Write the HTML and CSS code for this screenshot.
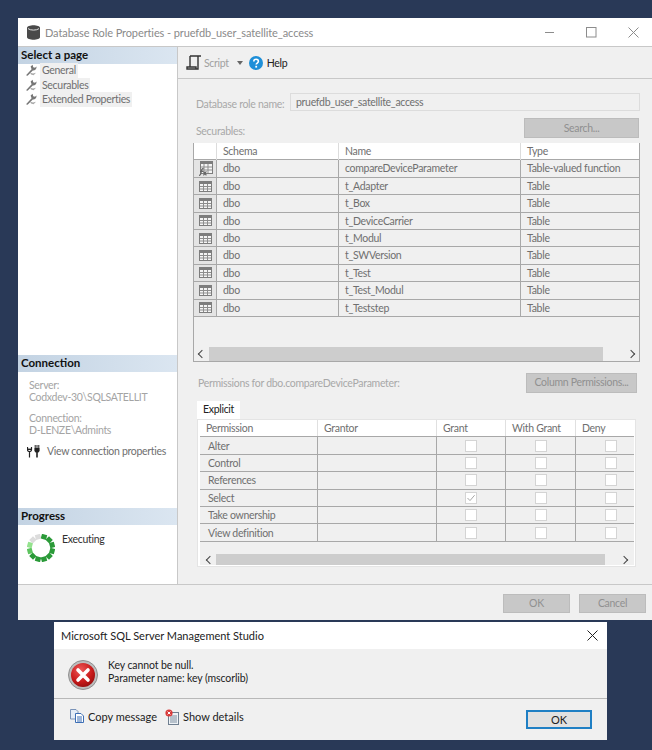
FILE: index.html
```html
<!DOCTYPE html>
<html lang="en">
<head>
  <meta charset="UTF-8" />
  <title>Database Role Properties</title>
  <link rel="stylesheet" href="styles.css">
</head>
<body>
  <svg class="defs" width="0" height="0">
    <defs>
      <symbol id="wrench" viewBox="0 0 12 12">
        <path d="M1 11.2 L6.6 5.2 L5.6 2.6 L7.6 .8 L8.2 3.2 L10 3.8 L11.6 2.4 C11.6 5 10 6.6 7.8 6.4 L2.6 11.8 Z" fill="#777"/>
        <path d="M5 8.4 L8 9.6 L11 8.8 L8.6 11.2 L6 10.6 Z" fill="#aaa"/>
      </symbol>
      <symbol id="grid" viewBox="0 0 13 11">
        <rect x=".5" y=".5" width="12" height="10" fill="#f4f4f4" stroke="#7d7d7d"/>
        <rect x="1" y="1" width="11" height="2" fill="#7d7d7d"/>
        <path d="M4.5 3V10M8.5 3V10M1 5.5H12M1 8H12" stroke="#8d8d8d" fill="none"/>
      </symbol>
      <symbol id="gridfx" viewBox="0 0 15 15">
        <rect x="2.5" y=".5" width="12" height="12" fill="#f4f4f4" stroke="#7d7d7d"/>
        <rect x="3" y="1" width="11" height="2" fill="#7d7d7d"/>
        <path d="M6 3V12M10 3V12M3 6H14M3 9H14" stroke="#8d8d8d" fill="none"/>
        <path d="M1 14.5 C3 14.5 3 13 3.4 10 C3.7 8 4 7.4 5.6 7.4 M2 10.4H5M5.4 10.4 L8.4 14.4M8.4 10.4 L5.4 14.4" stroke="#666" stroke-width="1.1" fill="none"/>
      </symbol>
      <symbol id="tick" viewBox="0 0 12 12">
        <path d="M2.5 6 L5 8.6 L9.6 3.2" stroke="#a8a8a8" fill="none"/>
      </symbol>
      <radialGradient id="red" cx=".4" cy=".3" r=".8">
        <stop offset="0" stop-color="#ee5a5a"/>
        <stop offset=".6" stop-color="#c81a1a"/>
        <stop offset="1" stop-color="#8a0c0c"/>
      </radialGradient>
    </defs>
  </svg>

  <div class="window">
    <div class="titlebar">
      <svg class="db-icon" width="13" height="15" viewBox="0 0 13 15"><path d="M0 3 C0 -.6 13 -.6 13 3 V12 C13 15.6 0 15.6 0 12 Z" fill="#4a4a4a"/><path d="M1 3.6 C3 5.6 10 5.6 12 3.6" stroke="#ddd" fill="none"/></svg>
      <span class="title">Database Role Properties - pruefdb_user_satellite_access</span>
      <div class="win-btns">
        <svg width="11" height="11" viewBox="0 0 11 11"><path d="M1 5.5H10" stroke="#8c8c8c"/></svg>
        <svg width="11" height="11" viewBox="0 0 11 11"><rect x=".5" y=".5" width="9.5" height="9.5" fill="none" stroke="#8c8c8c"/></svg>
        <svg width="11" height="11" viewBox="0 0 11 11"><path d="M.5 .5L10.5 10.5M10.5 .5L.5 10.5" stroke="#8c8c8c"/></svg>
      </div>
    </div>

    <div class="main">
      <aside class="side">
        <div class="side-head">Select a page</div>
        <ul class="pages">
          <li><svg width="12" height="12"><use href="#wrench"/></svg><span>General</span></li>
          <li><svg width="12" height="12"><use href="#wrench"/></svg><span>Securables</span></li>
          <li><svg width="12" height="12"><use href="#wrench"/></svg><span>Extended Properties</span></li>
        </ul>
        <div class="side-head conn-head">Connection</div>
        <div class="conn">
          <p>Server:<br>Codxdev-30\SQLSATELLIT</p>
          <p>Connection:<br>D-LENZE\Admints</p>
        </div>
        <div class="conn-link">
          <svg width="14" height="14" viewBox="0 0 14 14"><path d="M.5 3V5.5C.5 7 1.5 7.6 2.5 7.6C3.5 7.6 4.5 7 4.5 5.5V3M2.5 7V13.5" fill="none" stroke="#222" stroke-width="1.2"/><path d="M0 4.6H5V6H0Z" fill="#222"/><path d="M7.4 4H12.6V7L11.4 8.4H10.8V13.5H9.2V8.4H8.6L7.4 7Z" fill="#222"/><path d="M8.2 1V4M10 1V4M11.8 1V4" stroke="#222" stroke-width="1"/></svg>
          <span>View connection properties</span>
        </div>
        <div class="side-head prog-head">Progress</div>
        <div class="prog">
          <svg width="28" height="28" viewBox="-14 -14 28 28">
            <g class="seg-dark">
              <rect x="-2.7" y="-14" width="5.4" height="5" transform="rotate(15)"/>
              <rect x="-2.7" y="-14" width="5.4" height="5" transform="rotate(45)"/>
              <rect x="-2.7" y="-14" width="5.4" height="5" transform="rotate(75)"/>
              <rect x="-2.7" y="-14" width="5.4" height="5" transform="rotate(105)"/>
              <rect x="-2.7" y="-14" width="5.4" height="5" transform="rotate(135)"/>
              <rect x="-2.7" y="-14" width="5.4" height="5" transform="rotate(165)"/>
              <rect x="-2.7" y="-14" width="5.4" height="5" transform="rotate(195)"/>
              <rect x="-2.7" y="-14" width="5.4" height="5" transform="rotate(225)"/>
            </g>
            <rect class="seg-mid" x="-2.7" y="-14" width="5.4" height="5" transform="rotate(255)"/>
            <rect class="seg-light" x="-2.7" y="-14" width="5.4" height="5" transform="rotate(285)"/>
            <g class="seg-off">
              <rect x="-2.7" y="-14" width="5.4" height="5" transform="rotate(315)"/>
              <rect x="-2.7" y="-14" width="5.4" height="5" transform="rotate(345)"/>
            </g>
          </svg>
          <span>Executing</span>
        </div>
      </aside>

      <section class="content">
        <div class="toolbar">
          <svg class="script-icon" width="16" height="15" viewBox="0 0 16 15"><path d="M4 1H15M4 1V12M4 12H1V14H10V12H4M12 1V10M10 14H12V10" fill="none" stroke="#333" stroke-width="1.4"/></svg>
          <span class="tool-off">Script</span>
          <span class="caret"></span>
          <svg class="help-icon" width="14" height="14" viewBox="0 0 14 14"><circle cx="7" cy="7" r="7" fill="#1e8fd8"/><path d="M4.8 5.4 C4.8 2.6 9.4 2.6 9.4 5.2 C9.4 7 7.2 7 7.2 8.6" fill="none" stroke="#fff" stroke-width="1.6"/><rect x="6.3" y="9.8" width="1.8" height="1.8" fill="#fff"/></svg>
          <span class="tool-on">Help</span>
        </div>

        <div class="form">
          <div class="name-row">
            <label>Database role name:</label>
            <div class="name-input">pruefdb_user_satellite_access</div>
          </div>
          <div class="sec-row">
            <label>Securables:</label>
            <div class="btn search-btn">Search...</div>
          </div>

          <div class="sec-grid">
            <div class="sec-line head"><div></div><div>Schema</div><div>Name</div><div>Type</div></div>
            <div class="sec-line"><div class="ic"><svg width="15" height="15"><use href="#gridfx"/></svg></div><div>dbo</div><div>compareDeviceParameter</div><div>Table-valued function</div></div>
            <div class="sec-line"><div class="ic"><svg width="13" height="11"><use href="#grid"/></svg></div><div>dbo</div><div>t_Adapter</div><div>Table</div></div>
            <div class="sec-line"><div class="ic"><svg width="13" height="11"><use href="#grid"/></svg></div><div>dbo</div><div>t_Box</div><div>Table</div></div>
            <div class="sec-line"><div class="ic"><svg width="13" height="11"><use href="#grid"/></svg></div><div>dbo</div><div>t_DeviceCarrier</div><div>Table</div></div>
            <div class="sec-line"><div class="ic"><svg width="13" height="11"><use href="#grid"/></svg></div><div>dbo</div><div>t_Modul</div><div>Table</div></div>
            <div class="sec-line"><div class="ic"><svg width="13" height="11"><use href="#grid"/></svg></div><div>dbo</div><div>t_SWVersion</div><div>Table</div></div>
            <div class="sec-line"><div class="ic"><svg width="13" height="11"><use href="#grid"/></svg></div><div>dbo</div><div>t_Test</div><div>Table</div></div>
            <div class="sec-line"><div class="ic"><svg width="13" height="11"><use href="#grid"/></svg></div><div>dbo</div><div>t_Test_Modul</div><div>Table</div></div>
            <div class="sec-line"><div class="ic"><svg width="13" height="11"><use href="#grid"/></svg></div><div>dbo</div><div>t_Teststep</div><div>Table</div></div>
            <div class="scroll sec-scroll">
              <span class="arrow left"></span>
              <div class="thumb"></div>
              <span class="arrow right"></span>
            </div>
          </div>

          <div class="perm-row">
            <label>Permissions for dbo.compareDeviceParameter:</label>
            <div class="btn col-btn">Column Permissions...</div>
          </div>

          <div class="tab">Explicit</div>
          <div class="tab-panel">
            <div class="perm-line head"><div>Permission</div><div>Grantor</div><div>Grant</div><div>With Grant</div><div>Deny</div></div>
            <div class="perm-line"><div>Alter</div><div></div><div><i class="chk"></i></div><div><i class="chk"></i></div><div><i class="chk"></i></div></div>
            <div class="perm-line"><div>Control</div><div></div><div><i class="chk"></i></div><div><i class="chk"></i></div><div><i class="chk"></i></div></div>
            <div class="perm-line"><div>References</div><div></div><div><i class="chk"></i></div><div><i class="chk"></i></div><div><i class="chk"></i></div></div>
            <div class="perm-line"><div>Select</div><div></div><div><i class="chk"><svg width="12" height="12"><use href="#tick"/></svg></i></div><div><i class="chk"></i></div><div><i class="chk"></i></div></div>
            <div class="perm-line"><div>Take ownership</div><div></div><div><i class="chk"></i></div><div><i class="chk"></i></div><div><i class="chk"></i></div></div>
            <div class="perm-line"><div>View definition</div><div></div><div><i class="chk"></i></div><div><i class="chk"></i></div><div><i class="chk"></i></div></div>
            <div class="scroll perm-scroll">
              <span class="arrow left"></span>
              <div class="thumb"></div>
              <span class="arrow right"></span>
            </div>
          </div>
        </div>
      </section>
    </div>

    <div class="win-foot">
      <div class="btn foot-btn ok-off">OK</div>
      <div class="btn foot-btn">Cancel</div>
    </div>
  </div>

  <div class="dialog">
    <div class="dlg-title">
      <span>Microsoft SQL Server Management Studio</span>
      <svg width="11" height="11" viewBox="0 0 11 11"><path d="M.5 .5L10.5 10.5M10.5 .5L.5 10.5" stroke="#222"/></svg>
    </div>
    <div class="dlg-body">
      <svg width="30" height="30" viewBox="0 0 30 30"><circle cx="15" cy="15" r="14.5" fill="#bdbdbd" stroke="#8f8f8f"/><circle cx="15" cy="15" r="12" fill="url(#red)"/><path d="M10 10L20 20M20 10L10 20" stroke="#fff" stroke-width="3.6" stroke-linecap="round"/></svg>
      <p>Key cannot be null.<br>Parameter name: key (mscorlib)</p>
    </div>
    <div class="dlg-foot">
      <svg class="copy-icon" width="15" height="14" viewBox="0 0 15 14"><path d="M.5 .5H6L8 2.5V10H.5Z" fill="#e4ecf6" stroke="#7a93b8"/><path d="M5.5 4.5H11L13.5 7V13.5H5.5Z" fill="#fff" stroke="#3d6fb5"/><path d="M7 8H12M7 10H12M7 12H12" stroke="#3d6fb5"/></svg>
      <span class="dlg-link">Copy message</span>
      <svg class="details-icon" width="15" height="16" viewBox="0 0 15 16"><rect x="3.5" y="3.5" width="10" height="12" fill="#eef2f6" stroke="#6f7f90"/><path d="M5 7H12M5 9H12M5 11H12M5 13H12" stroke="#7f8fa0"/><circle cx="4" cy="4" r="3.6" fill="#d83a3a"/><path d="M2.6 2.6L5.4 5.4M5.4 2.6L2.6 5.4" stroke="#fff"/></svg>
      <span class="dlg-link">Show details</span>
      <div class="dlg-ok">OK</div>
    </div>
  </div>
</body>
</html>
```

FILE: styles.css
```css
html, body {
  height: 750px;
}
body {
  margin: 0;
  overflow: hidden;
  background: #293957;
  font-family: Lato, sans-serif;
  font-size: 10.5px;
  letter-spacing: -0.3px;
  color: #6f6f6f;
}
.defs {
  position: absolute;
}
p {
  margin: 0;
}

/* main window */
.window {
  margin: 18px 0 0 18px;
  width: 634px;
  height: 602px;
  background: #f0f0f0;
  display: flex;
  flex-direction: column;
}
.titlebar {
  height: 28px;
  flex: none;
  background: #fff;
  border-bottom: 1px solid #c8c8c8;
  display: flex;
  align-items: center;
  padding: 0 13px 0 9px;
}
.db-icon {
  margin-right: 5px;
}
.title {
  font-size: 11px;
  letter-spacing: -0.1px;
  color: #8a8a8a;
}
.win-btns {
  margin-left: auto;
  display: flex;
  gap: 31px;
}
.main {
  flex: 1;
  display: flex;
  min-height: 0;
}

/* left pane */
.side {
  width: 159px;
  flex: none;
  background: #fff;
  border-right: 1px solid #c8c8c8;
}
.side-head {
  height: 17px;
  line-height: 16px;
  padding-left: 3px;
  font-size: 11.5px;
  font-weight: 700;
  letter-spacing: 0;
  color: #111;
  background: linear-gradient(to right, #c3d3e3, #dbe6f1);
}
.pages {
  list-style: none;
  margin: -1px 0 0;
  padding: 0;
}
.pages li {
  height: 14.5px;
  display: flex;
  align-items: center;
  padding-left: 7px;
}
.pages li span {
  margin-left: 3px;
  padding: 0 2px;
  background: #f0f0f0;
  line-height: 14.5px;
}
.conn-head {
  margin-top: 248px;
}
.conn {
  padding: 7px 0 0 11px;
  color: #a4a4a4;
  line-height: 12.5px;
}
.conn p + p {
  margin-top: 8px;
}
.conn-link {
  display: flex;
  align-items: center;
  gap: 6px;
  padding: 7px 0 0 9px;
  white-space: nowrap;
}
.conn-link svg {
  flex: none;
}
.prog-head {
  margin-top: 50px;
}
.prog {
  display: flex;
  padding: 9px 0 0 9px;
  gap: 7px;
  color: #303030;
}
.prog span {
  line-height: 12px;
  margin-top: -1px;
}
.seg-dark { fill: #2a9a38; }
.seg-mid { fill: #5cc35e; }
.seg-light { fill: #94e28e; }
.seg-off { fill: #dcdcdc; }

/* right pane */
.content {
  flex: 1;
  min-width: 0;
}
.toolbar {
  height: 32px;
  box-sizing: border-box;
  border-bottom: 1px solid #c8c8c8;
  display: flex;
  align-items: center;
  padding-left: 8px;
}
.tool-off {
  margin-left: 2px;
  color: #a0a0a0;
}
.caret {
  margin: 0 6px 0 8px;
  border: 3.5px solid transparent;
  border-top: 4px solid #666;
  border-bottom: 0;
}
.tool-on {
  margin-left: 4px;
  color: #222;
}
.form {
  padding: 14px 12px 0 15px;
}
.form label {
  color: #a8a8a8;
  white-space: nowrap;
}
.name-row {
  display: flex;
  align-items: center;
  justify-content: space-between;
  height: 18px;
  margin-left: 3px;
}
.name-row label {
  margin-top: 3px;
}
.name-input {
  flex: none;
  width: 350px;
  height: 18px;
  line-height: 16px;
  box-sizing: border-box;
  border: 1px solid #dcdcdc;
  padding-left: 5px;
}
.sec-row {
  display: flex;
  align-items: center;
  justify-content: space-between;
  height: 20px;
  margin: 7px 1px 0 3px;
}
.sec-row label {
  margin-top: 5px;
}
.btn {
  box-sizing: border-box;
  background: #c8c8c8;
  border: 1px solid #bcbcbc;
  color: #909090;
  text-align: center;
}
.search-btn {
  width: 115px;
  height: 20px;
  line-height: 18px;
}

/* securables grid */
.sec-grid {
  margin-top: 5px;
  height: 219px;
  box-sizing: border-box;
  border: 1px solid #a8a8a8;
  border-top: 0;
  position: relative;
  background: #f0f0f0;
}
.sec-line {
  display: grid;
  grid-template-columns: 23px 122px 182px 1fr;
  height: 17.4px;
  box-sizing: border-box;
  border-bottom: 1px solid #a8a8a8;
}
.sec-line div {
  border-right: 1px solid #a8a8a8;
  padding-left: 6px;
  line-height: 16.5px;
  white-space: nowrap;
}
.sec-line div:last-child {
  border-right: 0;
}
.sec-line.head {
  background: #fff;
}
.sec-line.head div {
  border-right-color: #dcdcdc;
}
.sec-line .ic {
  padding: 0;
  display: flex;
  align-items: center;
  justify-content: center;
  background: #e4e4e4;
}

/* scrollbars sit on the bottom edge of their grid */
.scroll {
  position: absolute;
  left: 0;
  right: 0;
  display: flex;
  align-items: center;
  background: #f0f0f0;
}
.sec-scroll {
  bottom: 0;
  height: 14px;
  padding: 0 5px;
}
.thumb {
  height: 100%;
  background: #cdcdcd;
  flex: 1;
}
.sec-scroll .thumb {
  margin: 0 25px 0 4px;
}
.arrow {
  width: 5px;
  height: 5px;
  border-left: 1.6px solid #444;
  border-bottom: 1.6px solid #444;
  flex: none;
}
.arrow.left {
  transform: rotate(45deg);
}
.arrow.right {
  transform: rotate(225deg);
}

/* permissions */
.perm-row {
  display: flex;
  align-items: center;
  justify-content: space-between;
  height: 20px;
  margin: 11px 3px 0 5px;
}
.col-btn {
  width: 111px;
  height: 20px;
  line-height: 17px;
}
.tab {
  width: 43px;
  height: 18px;
  line-height: 17px;
  margin: 8px 0 0 4px;
  background: #fff;
  color: #222;
  text-align: center;
}
.tab-panel {
  position: relative;
  margin-left: 4px;
  width: 439px;
  height: 148px;
  box-sizing: border-box;
  border: 1px solid #fff;
  border-width: 1px 2px 2px 3px;
  outline: 1px solid #e4e4e4;
  outline-offset: -1px;
}
.perm-line {
  display: grid;
  grid-template-columns: 118px 119px 69px 70px 1fr;
  height: 17.4px;
  box-sizing: border-box;
  border-bottom: 1px solid #a8a8a8;
}
.perm-line div {
  border-right: 1px solid #a8a8a8;
  padding-left: 8px;
  line-height: 16px;
  display: flex;
  justify-content: center;
  align-items: center;
}
.perm-line div:first-child,
.perm-line div:nth-child(2) {
  justify-content: flex-start;
}
.perm-line div:nth-child(n+3) {
  padding-left: 0;
}
.perm-line div:last-child {
  border-right: 0;
  padding-left: 12px;
}
.perm-line.head {
  background: #fff;
}
.perm-line.head div {
  border-right-color: #e0e0e0;
  padding-left: 6px;
  justify-content: flex-start;
}
.chk {
  width: 12px;
  height: 12px;
  box-sizing: border-box;
  background: #fff;
  border: 1px solid #d4d4d4;
  display: block;
  position: relative;
}
.chk svg {
  position: absolute;
  left: -1px;
  top: -1px;
}
.perm-scroll {
  bottom: 0;
  height: 11px;
  padding: 0 7px;
}
.perm-scroll .thumb {
  margin: 0 16px 0 3px;
}

/* footer buttons */
.win-foot {
  height: 36px;
  flex: none;
  border-top: 1px solid #c8c8c8;
  display: flex;
  justify-content: flex-end;
  align-items: flex-start;
  gap: 9px;
  padding: 9px 6px 0 0;
  box-sizing: border-box;
}
.foot-btn {
  width: 67px;
  height: 19px;
  line-height: 16px;
}

/* error dialog */
.dialog {
  margin: 2px 0 0 54px;
  width: 553px;
  height: 118px;
  background: #f0f0f0;
  font-size: 11px;
  letter-spacing: 0;
  color: #222;
  display: flex;
  flex-direction: column;
}
.dlg-title {
  height: 27px;
  flex: none;
  background: #fff;
  display: flex;
  align-items: center;
  justify-content: space-between;
  padding: 0 9px 0 7px;
}
.dlg-body {
  height: 50px;
  flex: none;
  box-sizing: border-box;
  border-bottom: 1px solid #b8b8b8;
  display: flex;
  padding: 11px 0 0 14px;
  gap: 10px;
}
.dlg-body p {
  font-size: 10.5px;
  letter-spacing: -0.1px;
  line-height: 12.5px;
  margin-top: -1px;
}
.dlg-foot {
  flex: 1;
  display: flex;
  align-items: flex-start;
  padding: 10px 15px 0 16px;
}
.dlg-link {
  margin-left: 3px;
  line-height: 15px;
}
.details-icon {
  margin-left: 8px;
}
.dlg-ok {
  margin-left: auto;
  margin-top: 1px;
  width: 66px;
  height: 19px;
  box-sizing: border-box;
  border: 2px solid #1f7fc4;
  background: #e1e1e1;
  text-align: center;
  line-height: 15px;
}
```
